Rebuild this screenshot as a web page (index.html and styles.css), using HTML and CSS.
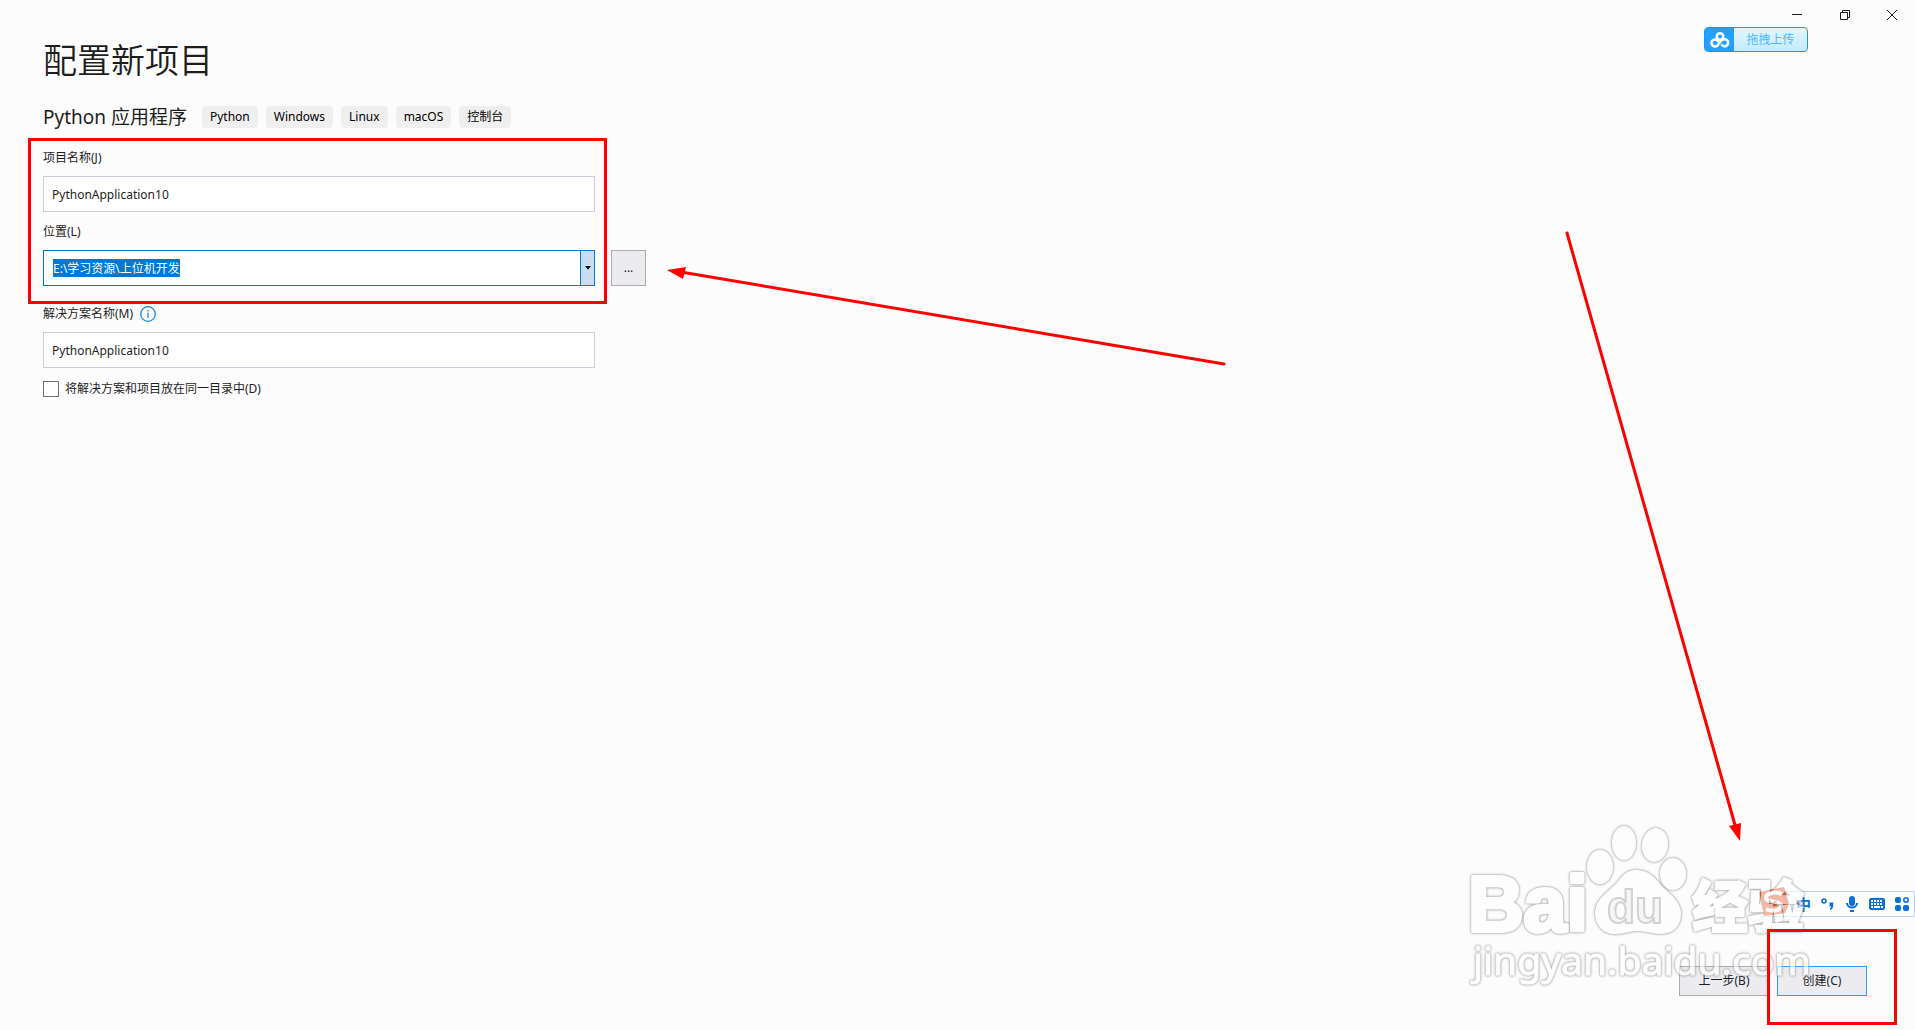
FILE: index.html
```
<!DOCTYPE html>
<html lang="zh-CN">
<head>
  <meta charset="UTF-8">
  <meta name="viewport" content="width=device-width, initial-scale=1.0">
  <title>配置新项目</title>
  <link rel="stylesheet" href="styles.css">
</head>
<body>

  <header class="title-bar">
    <button class="window-btn" aria-label="最小化">
      <svg width="10" height="10" viewBox="0 0 10 10"><path d="M0 4.5h10" /></svg>
    </button>
    <button class="window-btn" aria-label="还原">
      <svg width="10" height="10" viewBox="0 0 10 10"><path d="M.5 2.5h7v7h-7zM2.5 2.5v-2h7v7h-2" /></svg>
    </button>
    <button class="window-btn" aria-label="关闭">
      <svg width="10" height="10" viewBox="0 0 10 10"><path d="M0 0l10 10M10 0L0 10" /></svg>
    </button>
  </header>

  <!-- Floating upload button -->
  <button class="upload-btn">
    <span class="upload-icon">
      <svg width="20" height="16" viewBox="0 0 20 16" fill="none" stroke="#fff" stroke-width="2.6">
        <circle cx="10" cy="4.6" r="3.3" />
        <path d="M12 7.5L8 12.8A3.5 3.5 0 1 1 7.6 8.6L9.500 10.500" />
        <path d="M11.5 12.2A3.5 3.5 0 1 0 12.5 8" />
      </svg>
    </span>
    <span class="upload-text">拖拽上传</span>
  </button>

  <main>
    <h1>配置新项目</h1>

    <div class="template">
      <h2>Python 应用程序</h2>
      <ul class="tags">
        <li>Python</li>
        <li>Windows</li>
        <li>Linux</li>
        <li>macOS</li>
        <li>控制台</li>
      </ul>
    </div>

    <form class="project-form">
      <div class="field name">
        <label for="projectName">项目名称(J)</label>
        <input type="text" id="projectName" value="PythonApplication10">
      </div>

      <div class="field location">
        <label for="location">位置(L)</label>
        <div class="combo">
          <input type="text" id="location" value="E:\学习资源\上位机开发">
          <button type="button" class="combo-btn" aria-label="展开">
            <svg width="6" height="4" viewBox="0 0 6 4"><path d="M0 0h6L3 3.5z" /></svg>
          </button>
        </div>
      </div>
      <button type="button" class="browse-btn">...</button>
      <div class="highlight"></div>

      <div class="field solution">
        <div class="label-row">
          <label for="solutionName">解决方案名称(M)</label>
          <svg class="info" width="16" height="16" viewBox="0 0 16 16">
            <circle cx="8" cy="8" r="7.3" />
            <path d="M8 4v1.5M8 6.8V12" />
          </svg>
        </div>
        <input type="text" id="solutionName" value="PythonApplication10">
      </div>

      <div class="check-row">
        <input type="checkbox" id="sameDir">
        <label for="sameDir">将解决方案和项目放在同一目录中(D)</label>
      </div>
    </form>
  </main>

  <footer>
    <button class="button">上一步(B)</button>
    <div class="create-wrap">
      <button class="button create-btn">创建(C)</button>
    </div>
  </footer>

  <!-- Input method toolbar -->
  <div class="ime-bar">
    <svg class="ime-logo" width="32" height="32" viewBox="0 0 32 32">
      <path d="M1 6L26 1l5 17-4 9-21 3z" fill="#d83000" />
      <path d="M24 8C16 5 8 7 8 12c0 5 15 2 15 8 0 5-9 6-15 3" fill="none" stroke="#fff" stroke-width="4" />
    </svg>
    <span class="ime-lang">中</span>
    <svg width="14" height="14" viewBox="0 0 14 14">
      <circle cx="3" cy="4" r="2" fill="none" stroke="#0a6fd8" stroke-width="1.6" />
      <path d="M8.5 5.5h3.7v3.5c0 2-1 3.3-3.2 4v-1.7c.8-.4 1.2-1 1.2-1.8H8.5z" />
    </svg>
    <svg width="14" height="16" viewBox="0 0 14 16">
      <rect x="4" y="0" width="6" height="10" rx="3" />
      <path d="M2 7a5 4.5 0 0 0 10 0" fill="none" stroke="#0a6fd8" stroke-width="2" />
      <path d="M5 14h4v2H5z" />
    </svg>
    <svg width="16" height="12" viewBox="0 0 16 12">
      <rect width="16" height="12" rx="2" />
      <path d="M2 3h12M2 6h12" stroke="#fff" stroke-width="2" stroke-dasharray="2 1" />
      <path d="M2 9h2M5 9h6M12 9h2" stroke="#fff" stroke-width="2" />
    </svg>
    <svg width="14" height="14" viewBox="0 0 14 14">
      <rect x="0" y="0" width="6" height="6" rx="2" />
      <rect x="0" y="8" width="6" height="6" rx="2" />
      <rect x="8" y="8" width="6" height="6" rx="2" />
      <circle cx="11" cy="3" r="2.2" fill="none" stroke="#0a6fd8" stroke-width="1.6" />
    </svg>
  </div>

  <!-- Watermark -->
  <svg class="watermark" width="350" height="170" viewBox="0 0 350 170">
    <g class="mark">
      <text class="mark-bai" x="3" y="106">Bai</text>
      <ellipse cx="135" cy="42" rx="12" ry="16" />
      <ellipse cx="159" cy="18" rx="11" ry="16" />
      <ellipse cx="190" cy="20" rx="12" ry="16" transform="rotate(8 190 20)" />
      <ellipse cx="208" cy="49" rx="12" ry="15" />
      <path d="M171 46c-10 0-14 7-19 13-7 8-21 15-21 29 0 12 8 20 19 20 9 0 15-3 23-3s13 3 23 3c12 0 19-8 19-19 0-14-14-21-21-30-7-8-12-13-23-13z" />
    </g>
    <text class="mark-du" x="142" y="98">du</text>
    <g class="mark">
      <text class="mark-cn" x="227" y="102">经验</text>
      <text class="mark-url" x="8" y="150">jingyan.baidu.com</text>
    </g>
  </svg>

  <!-- Arrows -->
  <svg class="arrow arrow-left" width="560" height="100" viewBox="0 0 560 100">
    <path class="line" d="M557 97L14 5" />
    <path d="M0 3L19 0L16 12z" />
  </svg>
  <svg class="arrow arrow-right" width="180" height="612" viewBox="0 0 180 612">
    <path class="line" d="M4 2L172 594" />
    <path d="M177 610L166 595L178 592z" />
  </svg>

  <script>
    // The location is selected when the page opens
    const locationInput = document.getElementById('location');
    locationInput.focus();
    locationInput.select();
  </script>

</body>
</html>
```
FILE: styles.css
```
* {
  margin: 0;
  padding: 0;
  box-sizing: border-box;
}

body {
  position: relative;
  min-height: 100vh;
  display: flex;
  flex-direction: column;
  overflow: hidden;
  background-color: #fcfcfc;
  color: #1e1e1e;
  font-family: "Noto Sans", "Noto Sans CJK SC", sans-serif;
  font-size: 12px;
  line-height: 20px;
}

button, input {
  font: inherit;
  color: inherit;
}

.title-bar {
  display: flex;
  justify-content: flex-end;
  height: 30px;
}

.window-btn {
  width: 48px;
  border: none;
  background: none;
  display: flex;
  justify-content: center;
  align-items: center;
}

.window-btn:last-child {
  width: 46px;
}

.window-btn path {
  fill: none;
  stroke: #1e1e1e;
}

.upload-btn {
  position: absolute;
  top: 27px;
  right: 107px;
  width: 104px;
  height: 25px;
  display: flex;
  border: 1px solid #1e96f0;
  border-radius: 4px;
  overflow: hidden;
  background: linear-gradient(#e4f6ff, #c4ebff);
}

.upload-icon {
  width: 29px;
  height: 100%;
  display: flex;
  justify-content: center;
  align-items: center;
  background-color: #22a0fc;
}

.upload-text {
  flex: 1;
  line-height: 23px;
  color: #4fb8ff;
}

main {
  flex: 1;
  padding: 10px 43px;
}

h1 {
  font-size: 34px;
  font-weight: 350;
  line-height: 40px;
}

.template {
  display: flex;
  align-items: center;
  gap: 15px;
  margin: 24px 0 18px;
}

h2 {
  font-size: 19px;
  font-weight: 400;
  line-height: 26px;
}

.tags {
  display: flex;
  gap: 8px;
  list-style: none;
}

.tags li {
  padding: 0 8px;
  border-radius: 4px;
  background-color: #efefef;
  color: #000;
  line-height: 22px;
}

.project-form {
  display: grid;
  grid-template-columns: minmax(0, 552px) 35px;
  column-gap: 16px;
}

.field {
  grid-column: 1;
  display: flex;
  flex-direction: column;
  gap: 8px;
}

.name {
  grid-row: 1;
}

.location {
  grid-row: 2;
  margin-top: 10px;
}

.solution {
  grid-row: 3;
  margin-top: 18px;
}

.field input {
  width: 100%;
  height: 36px;
  padding: 0 8px;
  border: 1px solid #cccedb;
  background-color: #fff;
  outline: none;
}

.combo {
  display: flex;
  height: 36px;
  border: 1px solid #007acc;
}

.combo input {
  height: 34px;
  padding: 0 9px;
  border: none;
}

.combo input::selection {
  background-color: #0078d7;
  color: #fff;
}

.combo-btn {
  flex: 0 0 14px;
  border: none;
  border-left: 1px solid #007acc;
  background-color: #c9def5;
  display: flex;
  justify-content: center;
  align-items: center;
}

.browse-btn {
  grid-column: 2;
  grid-row: 2;
  align-self: end;
  height: 36px;
  border: 1px solid #acacac;
  background-color: #ececf0;
}

/* Red frame over the first two fields */
.highlight {
  grid-area: 1 / 1 / 3 / 2;
  margin: -10px -12px -18px -15px;
  border: 3px solid #f00;
  pointer-events: none;
}

.label-row {
  display: flex;
  align-items: center;
  gap: 7px;
}

.info {
  fill: none;
  stroke: #1c86d8;
  stroke-width: 1.3;
}

.check-row {
  grid-column: 1;
  display: flex;
  align-items: center;
  gap: 6px;
  margin-top: 11px;
}

.check-row input {
  appearance: none;
  width: 16px;
  height: 16px;
  border: 1px solid #717171;
  background-color: #fff;
}

footer {
  display: flex;
  justify-content: flex-end;
  gap: 8px;
  padding: 0 48px 34px;
}

.button {
  width: 90px;
  height: 30px;
  border: 1px solid #acacac;
  background-color: #ececf0;
}

.create-btn {
  border-color: #3399ff;
}

.create-wrap {
  position: relative;
}

.create-wrap::after {
  content: "";
  position: absolute;
  z-index: 3;
  inset: -37px -30px -29px -10px;
  border: 3px solid #f00;
  pointer-events: none;
}

.ime-bar {
  position: absolute;
  right: 0;
  bottom: 113px;
  height: 26px;
  display: flex;
  align-items: center;
  gap: 10px;
  padding-right: 5px;
  border: 1px solid #b8d0ec;
  border-left: none;
  border-radius: 2px;
  background-color: #fff;
  fill: #0a6fd8;
}

.ime-logo {
  margin: -4px -4px 0 -4px;
}

.ime-lang {
  color: #0a6fd8;
  font-size: 15px;
  font-weight: bold;
}

.watermark {
  position: absolute;
  z-index: 2;
  right: 100px;
  bottom: 35px;
  overflow: visible;
  opacity: 0.65;
  pointer-events: none;
}

.mark {
  fill: #fff;
  stroke: #fff;
  stroke-width: 2;
  stroke-linejoin: round;
  filter: drop-shadow(0 0 1px #777) drop-shadow(0 0 1px #aaa);
}

.mark-bai {
  font: bold 77px "Liberation Sans", sans-serif;
  stroke-width: 4;
}

.mark-du {
  font: bold 46px "Liberation Sans", sans-serif;
  fill: #f4f4f4;
  stroke: #bbb;
  stroke-width: 2;
}

.mark-cn {
  font: 900 56px "Noto Sans CJK SC", sans-serif;
}

.mark-url {
  font: 39px "Noto Sans", sans-serif;
  stroke-width: 1;
}

.arrow {
  position: absolute;
  z-index: 4;
  fill: #f00;
  pointer-events: none;
}

.arrow .line {
  stroke: #f00;
  stroke-width: 3;
  stroke-linecap: round;
}

.arrow-left {
  left: 667px;
  top: 267px;
}

.arrow-right {
  right: 172px;
  bottom: 187px;
}
```
